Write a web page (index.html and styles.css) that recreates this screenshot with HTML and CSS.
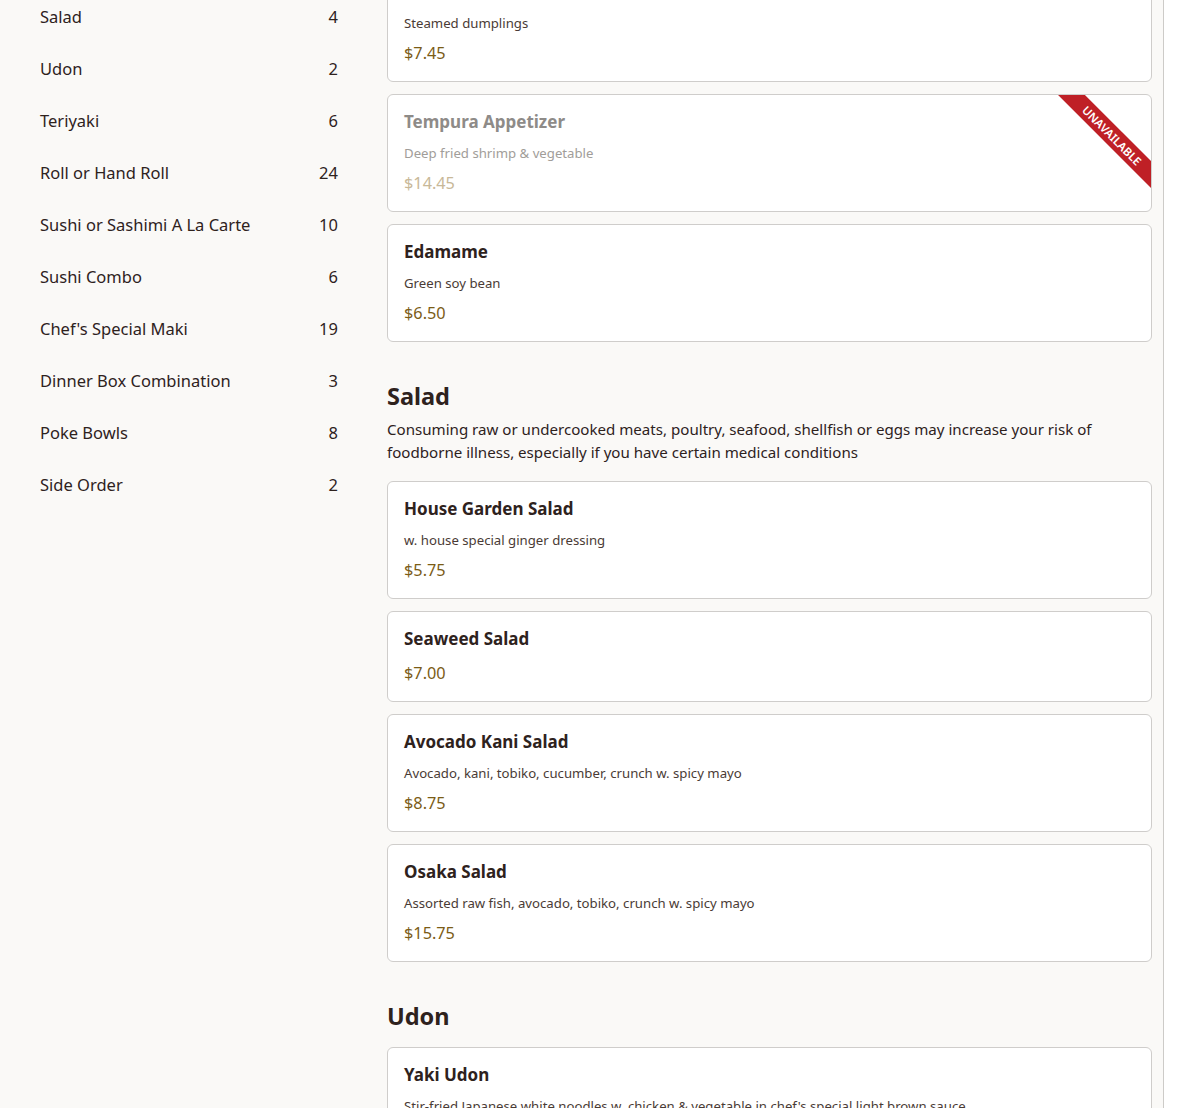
FILE: index.html
```html
<!DOCTYPE html>
<html lang="en">
<head>
<meta charset="utf-8">
<title>Menu</title>
<link rel="stylesheet" href="styles.css">
</head>
<body>
<div class="page">
  <aside class="sidebar">
    <ul class="cat-list">
      <li class="cat"><span>Salad</span><span>4</span></li>
      <li class="cat"><span>Udon</span><span>2</span></li>
      <li class="cat"><span>Teriyaki</span><span>6</span></li>
      <li class="cat"><span>Roll or Hand Roll</span><span>24</span></li>
      <li class="cat"><span>Sushi or Sashimi A La Carte</span><span>10</span></li>
      <li class="cat"><span>Sushi Combo</span><span>6</span></li>
      <li class="cat"><span>Chef's Special Maki</span><span>19</span></li>
      <li class="cat"><span>Dinner Box Combination</span><span>3</span></li>
      <li class="cat"><span>Poke Bowls</span><span>8</span></li>
      <li class="cat"><span>Side Order</span><span>2</span></li>
    </ul>
  </aside>
  <main class="main">
    <section class="section first">
      <div class="card">
        <h3 class="item-name">Shumai</h3>
        <p class="item-desc">Steamed dumplings</p>
        <p class="item-price">$7.45</p>
      </div>
      <div class="card unavailable">
        <h3 class="item-name">Tempura Appetizer</h3>
        <p class="item-desc">Deep fried shrimp &amp; vegetable</p>
        <p class="item-price">$14.45</p>
        <div class="ribbon">Unavailable</div>
      </div>
      <div class="card">
        <h3 class="item-name">Edamame</h3>
        <p class="item-desc">Green soy bean</p>
        <p class="item-price">$6.50</p>
      </div>
    </section>

    <section class="section">
      <h2 class="section-title">Salad</h2>
      <p class="section-desc">Consuming raw or undercooked meats, poultry, seafood, shellfish or eggs may increase your risk of foodborne illness, especially if you have certain medical conditions</p>
      <div class="card">
        <h3 class="item-name">House Garden Salad</h3>
        <p class="item-desc">w. house special ginger dressing</p>
        <p class="item-price">$5.75</p>
      </div>
      <div class="card">
        <h3 class="item-name">Seaweed Salad</h3>
        <p class="item-price">$7.00</p>
      </div>
      <div class="card">
        <h3 class="item-name">Avocado Kani Salad</h3>
        <p class="item-desc">Avocado, kani, tobiko, cucumber, crunch w. spicy mayo</p>
        <p class="item-price">$8.75</p>
      </div>
      <div class="card">
        <h3 class="item-name">Osaka Salad</h3>
        <p class="item-desc">Assorted raw fish, avocado, tobiko, crunch w. spicy mayo</p>
        <p class="item-price">$15.75</p>
      </div>
    </section>

    <section class="section">
      <h2 class="section-title">Udon</h2>
      <div class="card">
        <h3 class="item-name">Yaki Udon</h3>
        <p class="item-desc">Stir-fried Japanese white noodles w. chicken &amp; vegetable in chef's special light brown sauce</p>
        <p class="item-price">$13.95</p>
      </div>
    </section>
  </main>
</div>
</body>
</html>
```

FILE: styles.css
```css
* { box-sizing: border-box; }

html, body {
  margin: 0;
  padding: 0;
  background: #ffffff;
  height: 1108px;
  overflow: hidden;
}

body {
  font-family: "Noto Sans", Lato, "DejaVu Sans", sans-serif;
  color: #2e221d;
}

.page {
  display: flex;
  width: 1164px;
  height: 1108px;
  overflow: hidden;
  background: #faf9f7;
  border-right: 1px solid #cdcbc8;
}

.sidebar {
  width: 363px;
  flex: 0 0 363px;
  padding: 0 25px 0 40px;
}

.cat-list {
  list-style: none;
  margin: -10px 0 0;
  padding: 0;
}

.cat {
  display: flex;
  justify-content: space-between;
  align-items: center;
  height: 52px;
  font-size: 16.5px;
  color: #2e221d;
}

.main {
  flex: 1;
  padding: 0 11px 0 24px;
}

.section {
  display: flex;
  flex-direction: column;
  gap: 12px;
  margin-top: 38px;
}

.section.first {
  margin-top: -36px;
}

.section-title {
  margin: 0 0 3px;
  font-size: 23.5px;
  line-height: 32px;
  font-weight: 700;
  color: #2e221d;
}

.section-desc {
  margin: -9px 0 5px;
  font-size: 15.1px;
  line-height: 23px;
  color: #2e221d;
}

.card {
  position: relative;
  overflow: hidden;
  background: #ffffff;
  border: 1px solid #cfcdcb;
  border-radius: 6px;
  padding: 17px 16px 18px;
  display: flex;
  flex-direction: column;
}

.item-name {
  margin: 0;
  font-size: 17px;
  line-height: 20px;
  font-weight: 700;
  color: #2e221d;
}

.item-desc {
  margin: 12px 0 0;
  font-size: 13.2px;
  line-height: 18px;
  color: #4a3b35;
}

.item-price {
  margin: 11px 0 0;
  font-size: 16.3px;
  line-height: 20px;
  color: #7b5c16;
}

.item-name + .item-price {
  margin-top: 14px;
}

.unavailable .item-name { color: #8e8b88; }
.unavailable .item-desc { color: #a19d99; }
.unavailable .item-price { color: #c8b898; }

.ribbon {
  position: absolute;
  top: 31px;
  right: -41px;
  width: 160px;
  height: 19px;
  transform: rotate(45deg);
  background: #bf2026;
  color: #ffffff;
  font-size: 11.5px;
  font-weight: 600;
  line-height: 19px;
  text-align: center;
  text-transform: uppercase;
}
```
